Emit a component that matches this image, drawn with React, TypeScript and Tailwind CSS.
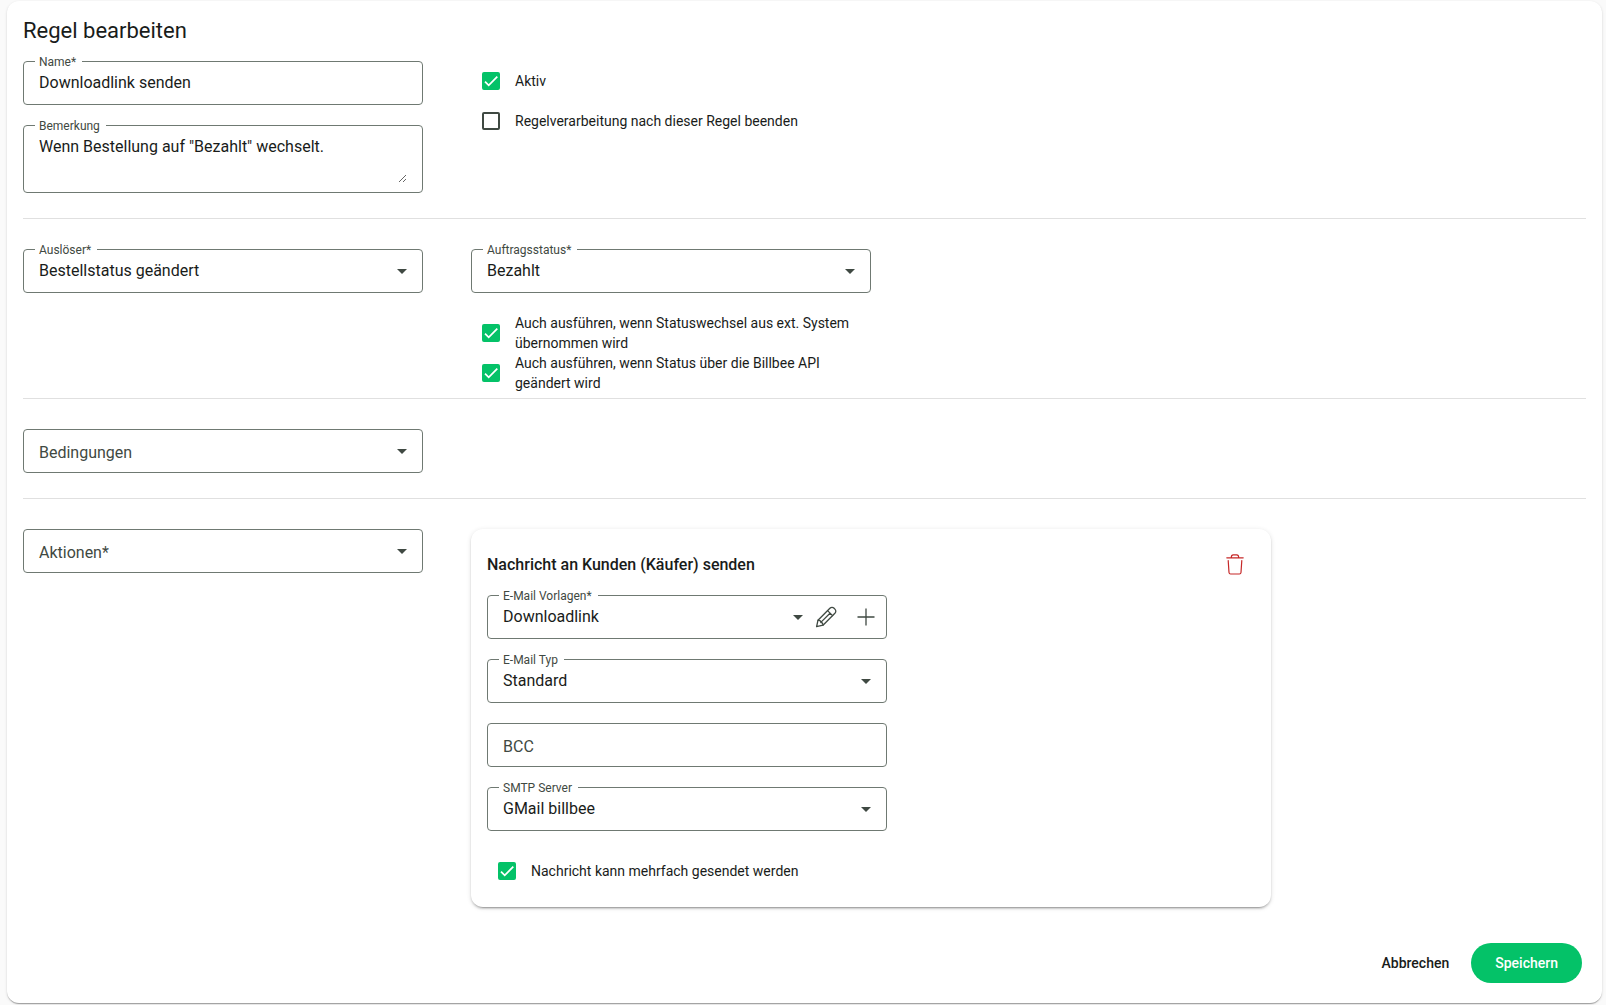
import React, { useState } from "react";

type FieldProps = {
  id: string;
  label: string;
  resting?: boolean;
  children: React.ReactNode;
};

// outlined form field, the label sits in the border or inside the empty control
const Field = ({ id, label, resting, children }: FieldProps) => {
  return (
    <div className="relative mb-5 flex w-full rounded border border-[#6f7972] focus-within:border-[#04c268]">
      {children}
      <label
        htmlFor={id}
        className={
          resting
            ? "pointer-events-none absolute left-[15px] top-2 text-base leading-[30px] text-[#3f4942]"
            : "absolute -top-2 left-[11px] bg-white pl-1 pr-1.5 text-xs leading-4 text-[#3f4942]"
        }
      >
        {label}
      </label>
    </div>
  );
};

type SelectFieldProps = {
  id: string;
  label: string;
  options: string[];
  actions?: React.ReactNode;
};

const SelectField = ({ id, label, options, actions }: SelectFieldProps) => {
  const [value, setValue] = useState(options[0] ?? "");

  return (
    <Field id={id} label={label} resting={value === ""}>
      <div className="relative flex min-w-0 flex-1">
        <select
          id={id}
          value={value}
          onChange={(e) => setValue(e.target.value)}
          className="h-[42px] w-full appearance-none bg-transparent px-[15px] text-base text-[#191c1a] outline-none"
        >
          {options.length === 0 && <option value=""></option>}
          {options.map((item) => (
            <option key={item} value={item}>
              {item}
            </option>
          ))}
        </select>
        <svg
          viewBox="0 0 10 5"
          className={
            actions
              ? "pointer-events-none absolute right-[3px] top-[19px] h-[5px] w-[10px]"
              : "pointer-events-none absolute right-[15px] top-[19px] h-[5px] w-[10px]"
          }
        >
          <path d="M0 0h10L5 5z" fill="#3f4942" />
        </svg>
      </div>
      {actions}
    </Field>
  );
};

type CheckProps = {
  id: string;
  label: string;
  defaultChecked?: boolean;
};

const Check = ({ id, label, defaultChecked }: CheckProps) => {
  return (
    <div className="flex min-h-10 items-center gap-1">
      <div className="grid h-10 w-10 shrink-0 place-items-center">
        <input
          id={id}
          type="checkbox"
          defaultChecked={defaultChecked}
          className="peer col-start-1 row-start-1 h-[18px] w-[18px] appearance-none rounded-xs border-2 border-[#3f4942] checked:border-[#04c268] checked:bg-[#04c268]"
        />
        <svg
          viewBox="0 0 24 24"
          fill="none"
          stroke="#fff"
          strokeWidth="3"
          className="pointer-events-none invisible col-start-1 row-start-1 h-[14px] w-[14px] peer-checked:visible"
        >
          <path d="M1.73 12.91 8.1 19.28 22.79 4.59" />
        </svg>
      </div>
      <label htmlFor={id} className="text-sm leading-5 text-[#191c1a]">
        {label}
      </label>
    </div>
  );
};

const Section = ({ children }: { children: React.ReactNode }) => {
  return (
    <section className="mb-[30px] flex flex-wrap gap-x-12 border-b border-[#e0e0e0] pb-[5px]">
      {children}
    </section>
  );
};

const PencilIcon = () => (
  <svg viewBox="0 0 22 22" fill="none" stroke="#3f4942" strokeWidth="1.3" strokeLinejoin="round" strokeLinecap="round" className="h-[22px] w-[22px]">
    <path d="M1.6 20.6 3 14.2 14.9 2.3c1.2-1.2 3-1.2 4.2 0l.8.8c1.2 1.2 1.2 3 0 4.2L8 19.2z" />
    <path d="m12.6 4.6 5 5M3 14.2l2.4.7.5 1.6 1.5.4.6 2.3M5.8 16.4l9.2-9.2" />
  </svg>
);

const PlusIcon = () => (
  <svg viewBox="0 0 18 18" fill="none" stroke="#3f4942" strokeWidth="1.3" className="h-[18px] w-[18px]">
    <path d="M9 .5v17M.5 9h17" />
  </svg>
);

const TrashIcon = () => (
  <svg viewBox="0 0 18 22" fill="none" stroke="#c62828" strokeWidth="1.2" strokeLinecap="round" strokeLinejoin="round" className="h-[22px] w-[18px]">
    <path d="M.8 3.8h16.4M5.3 3.6C5.3 1.6 6 .8 7.3.8h3.4c1.3 0 2 .8 2 2.8M2.2 6.5l.8 12c.1 1 .6 1.5 1.6 1.5h8.8c1 0 1.5-.5 1.6-1.5l.8-12" />
  </svg>
);

const App = () => {
  return (
    <div className="min-h-screen bg-[#fafafa] pb-0.5 pl-[7px] pr-1 pt-px font-[Roboto,sans-serif] text-[#191c1a]">
      <form
        onSubmit={(e) => e.preventDefault()}
        className="rounded-xl bg-white p-4 pb-5 shadow-[0_2px_1px_-1px_rgba(0,0,0,0.2),0_1px_1px_rgba(0,0,0,0.14),0_1px_3px_rgba(0,0,0,0.12)]"
      >
        <h1 className="mb-4 text-[22px] leading-7">Regel bearbeiten</h1>

        <Section>
          <div className="w-full max-w-[400px]">
            <Field id="name" label="Name*">
              <input
                id="name"
                type="text"
                defaultValue="Downloadlink senden"
                className="h-[42px] w-full bg-transparent px-[15px] pb-0.5 text-base outline-none"
              />
            </Field>
            <Field id="note" label="Bemerkung">
              <div className="flex w-full px-[15px] pb-[9px] pt-[9px]">
                <textarea
                  id="note"
                  rows={2}
                  defaultValue={'Wenn Bestellung auf "Bezahlt" wechselt.'}
                  className="w-full resize bg-transparent text-base leading-6 outline-none"
                />
              </div>
            </Field>
          </div>
          <div className="w-full max-w-[400px]">
            <Check id="active" label="Aktiv" defaultChecked />
            <Check id="stop" label="Regelverarbeitung nach dieser Regel beenden" />
          </div>
        </Section>

        <Section>
          <div className="w-full max-w-[400px]">
            <SelectField id="trigger" label="Auslöser*" options={["Bestellstatus geändert"]} />
          </div>
          <div className="w-full max-w-[400px]">
            <SelectField id="status" label="Auftragsstatus*" options={["Bezahlt"]} />
            <Check
              id="external"
              label="Auch ausführen, wenn Statuswechsel aus ext. System übernommen wird"
              defaultChecked
            />
            <Check
              id="api"
              label="Auch ausführen, wenn Status über die Billbee API geändert wird"
              defaultChecked
            />
          </div>
        </Section>

        <Section>
          <div className="w-full max-w-[400px]">
            <SelectField id="conditions" label="Bedingungen" options={[]} />
          </div>
        </Section>

        <div className="flex gap-x-12">
          <div className="w-full max-w-[400px]">
            <SelectField id="actions" label="Aktionen*" options={[]} />
          </div>

          <div className="w-full max-w-[800px] rounded-xl bg-white p-4 shadow-[0_3px_1px_-2px_rgba(0,0,0,0.2),0_2px_2px_rgba(0,0,0,0.14),0_1px_5px_rgba(0,0,0,0.12)]">
            <div className="mb-2.5 flex items-center justify-between">
              <h2 className="text-base font-medium">Nachricht an Kunden (Käufer) senden</h2>
              <button type="button" aria-label="Löschen" className="flex h-10 w-10 items-center justify-center">
                <TrashIcon />
              </button>
            </div>
            <div className="w-full max-w-[400px]">
              <SelectField
                id="template"
                label="E-Mail Vorlagen*"
                options={["Downloadlink"]}
                actions={
                  <>
                    <button type="button" aria-label="Bearbeiten" className="flex w-10 items-center justify-center">
                      <PencilIcon />
                    </button>
                    <button type="button" aria-label="Hinzufügen" className="flex w-10 items-center justify-center">
                      <PlusIcon />
                    </button>
                  </>
                }
              />
              <SelectField id="type" label="E-Mail Typ" options={["Standard"]} />
              <Field id="bcc" label="BCC" resting>
                <input id="bcc" type="text" className="h-[42px] w-full bg-transparent px-[15px] pb-0.5 text-base outline-none" />
              </Field>
              <SelectField id="smtp" label="SMTP Server" options={["GMail billbee"]} />
              <Check id="repeat" label="Nachricht kann mehrfach gesendet werden" defaultChecked />
            </div>
          </div>
        </div>

        <div className="mt-9 flex justify-end gap-2.5 pr-1">
          <button type="button" className="h-10 rounded-full px-3 text-sm font-medium">
            Abbrechen
          </button>
          <button type="submit" className="h-10 rounded-full bg-[#04c268] px-6 text-sm font-medium text-white">
            Speichern
          </button>
        </div>
      </form>
    </div>
  );
};

export default App;
